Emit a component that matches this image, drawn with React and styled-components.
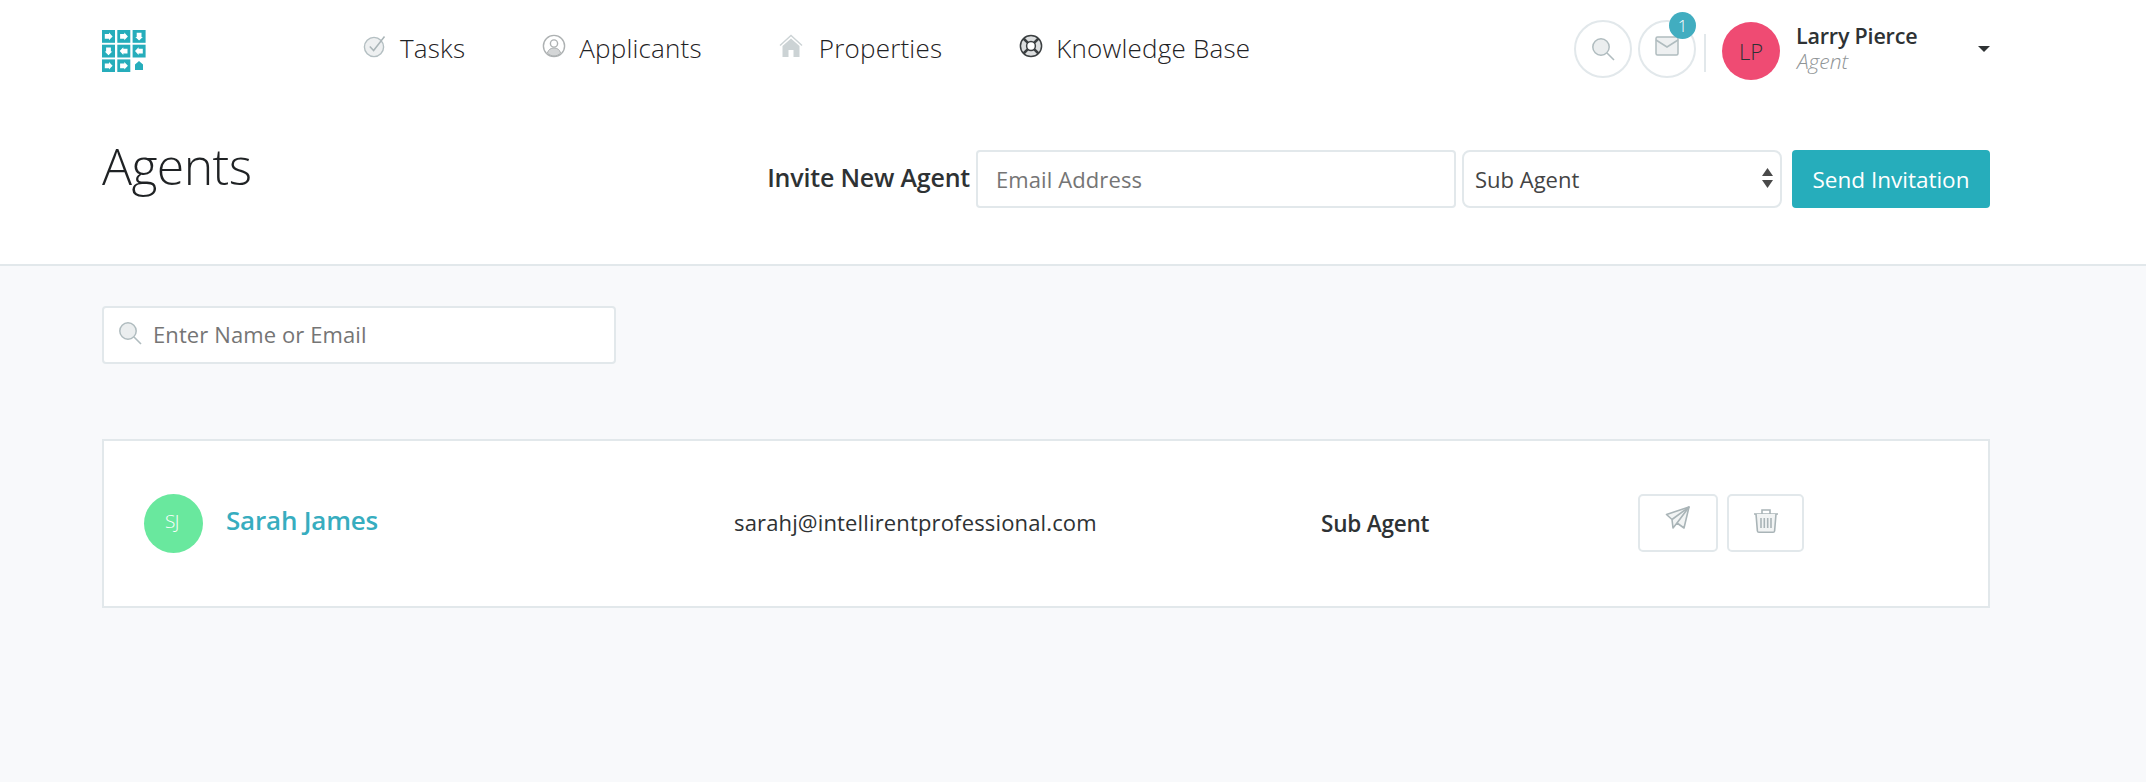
import React from "react";
import styled, {createGlobalStyle} from "styled-components";

const GlobalStyle = createGlobalStyle`
  html, body {
    margin: 0;
    background-color: #f8f9fb;
    font-family: "Open Sans", "Liberation Sans", sans-serif;
    color: #2e3234;
  }
`

const TopArea = styled.div`
  height: 266px;
  box-sizing: border-box;
  padding: 0 156px 0 102px;
  background-color: #fff;
  border-bottom: 2px solid #e2e8eb;
`

const HeaderRow = styled.header`
  height: 100px;
  display: flex;
  align-items: flex-start;
`

const Logo = styled.svg`
  width: 44px;
  height: 42px;
  margin-top: 30px;
  flex: none;
`

const Nav = styled.nav`
  display: flex;
  margin-left: 217px;
  margin-top: 30px;
`

const NavItem = styled.a`
  display: flex;
  align-items: center;
  height: 36px;
  margin-right: 77px;
  font-size: 26px;
  font-weight: 300;
  letter-spacing: 0.2px;
  color: #1f2224;

  svg {
    width: 24px;
    height: 24px;
    margin-right: ${p => p.$gap || 13}px;
    margin-top: -4px;
    flex: none;
  }
`

const UserArea = styled.div`
  margin-left: auto;
  display: flex;
  align-items: flex-start;
  width: 416px;
  padding-top: 20px;
`

const RoundButton = styled.div`
  position: relative;
  width: 58px;
  height: 58px;
  box-sizing: border-box;
  margin-right: 6px;
  border: 2px solid #e2e8eb;
  border-radius: 50%;
  display: flex;
  align-items: center;
  justify-content: center;
  flex: none;

  svg {
    width: 24px;
    height: 24px;
    margin-top: ${p => p.$lift || 0}px;
  }
`

const Badge = styled.span`
  position: absolute;
  top: -10px;
  right: -2px;
  width: 27px;
  height: 27px;
  border-radius: 50%;
  background-color: #41adc0;
  color: #fff;
  font-size: 17px;
  font-weight: 300;
  line-height: 27px;
  text-align: center;
`

const Divider = styled.div`
  width: 2px;
  height: 38px;
  margin: 14px 16px 0 2px;
  background-color: #e2e8eb;
  flex: none;
`

const Avatar = styled.div`
  width: ${p => p.$size}px;
  height: ${p => p.$size}px;
  box-sizing: border-box;
  border-radius: 50%;
  background-color: ${p => p.$color};
  color: ${p => p.$text};
  font-size: ${p => p.$font}px;
  font-weight: 300;
  display: flex;
  align-items: center;
  justify-content: center;
  flex: none;
`

const UserAvatar = styled(Avatar)`
  margin-top: 2px;
`

const AgentAvatar = styled(Avatar)`
  padding: 0 3px 5px 0;
  letter-spacing: -0.5px;
`

const UserText = styled.div`
  margin-left: 16px;
  flex: 1;
`

const UserName = styled.div`
  font-size: 21.5px;
  font-weight: 600;
  line-height: 28px;
  letter-spacing: -0.2px;
  margin-top: 2px;
`

const UserRole = styled.div`
  margin-left: 1px;
  font-size: 21px;
  font-style: italic;
  font-weight: 300;
  line-height: 22px;
  color: #8f9496;
`

const Caret = styled.div`
  width: 0;
  height: 0;
  margin-top: 26px;
  border-left: 6px solid transparent;
  border-right: 6px solid transparent;
  border-top: 6px solid #2e3234;
`

const TitleRow = styled.div`
  display: flex;
  align-items: flex-start;
`

const Title = styled.h1`
  margin: 33px 0 0;
  font-size: 50px;
  line-height: 66px;
  font-weight: 300;
  letter-spacing: -0.6px;
  color: #1f2224;
`

const InviteForm = styled.form`
  margin-left: auto;
  margin-top: 50px;
  display: flex;
  align-items: flex-start;
`

const InviteLabel = styled.label`
  margin-right: 6px;
  font-size: 25px;
  font-weight: 600;
  line-height: 54px;
  letter-spacing: -0.2px;
`

const TextInput = styled.input`
  width: ${p => p.$width}px;
  height: 58px;
  box-sizing: border-box;
  padding: 0 ${p => p.$pad || 18}px;
  background-color: #fff;
  border: 2px solid #e2e8eb;
  border-radius: 4px;
  font-family: inherit;
  font-size: 22px;
  font-weight: 400;
  letter-spacing: 0.1px;
  color: #333;
  outline: none;

  &::placeholder {
    color: #757575;
    opacity: 1;
  }
`

const SelectWrap = styled.div`
  position: relative;
  margin: 0 10px 0 6px;
  width: 320px;
  height: 58px;
`

const Select = styled.select`
  width: 100%;
  height: 100%;
  box-sizing: border-box;
  padding: 0 11px;
  appearance: none;
  background-color: #fff;
  border: 2px solid #e2e8eb;
  border-radius: 8px;
  font-family: inherit;
  font-size: 22px;
  color: #444;
  outline: none;
`

const SelectArrows = styled.svg`
  position: absolute;
  top: 17px;
  right: 9px;
  width: 11px;
  height: 22px;
  pointer-events: none;
`

const SendButton = styled.button`
  width: 198px;
  height: 58px;
  padding: 0;
  border: 0;
  border-radius: 4px;
  background-color: #26adbb;
  color: #fff;
  font-family: inherit;
  font-size: 22.5px;
  font-weight: 500;
`

const Content = styled.main`
  height: 516px;
  box-sizing: border-box;
  padding: 40px 156px 0 102px;
`

const SearchBox = styled.div`
  position: relative;
  width: 514px;

  input {
    padding-bottom: 2px;
  }
`

const SearchIcon = styled.svg`
  position: absolute;
  top: 15px;
  left: 16px;
  width: 24px;
  height: 24px;
`

const AgentCard = styled.section`
  margin-top: 75px;
  height: 169px;
  box-sizing: border-box;
  padding-left: 40px;
  background-color: #fff;
  border: 2px solid #e2e8eb;
  display: grid;
  grid-template-columns: 590px 587px 317px auto;
  align-items: center;
`

const NameCell = styled.div`
  display: flex;
  align-items: center;
`

const AgentName = styled.a`
  margin-left: 23px;
  margin-bottom: 7px;
  font-size: 26px;
  font-weight: 600;
  letter-spacing: -0.2px;
  color: #37adbf;
`

const AgentEmail = styled.div`
  margin-bottom: 4px;
  font-size: 22px;
  font-weight: 400;
  letter-spacing: 0.15px;
  color: #2e3234;
`

const AgentRole = styled.div`
  font-size: 22.5px;
  font-weight: 600;
  letter-spacing: -0.2px;
`

const Actions = styled.div`
  display: flex;
  gap: 9px;
  margin-bottom: 2px;
`

const ActionButton = styled.button`
  width: ${p => p.$width}px;
  height: 58px;
  padding: 0;
  background-color: #fff;
  border: 2px solid #e2e8eb;
  border-radius: 5px;
  display: flex;
  align-items: center;
  justify-content: center;

  svg {
    width: 26px;
    height: 26px;
    margin-top: ${p => p.$lift || -4}px;
  }
`

const LogoIcon = () => {
    const cells = [
        [0, 0, 0], [15.3, 0, 0], [30.6, 0, 90],
        [0, 14.7, 90], [15.3, 14.7, 180], [30.6, 14.7, 180],
        [0, 29.4, 0], [15.3, 29.4, 0],
    ];
    return (
        <Logo viewBox="0 0 44 42">
            {cells.map(([x, y, r]) => (
                <g key={`${x}-${y}`} transform={`translate(${x} ${y})`}>
                    <rect width="13" height="12.8" fill="#26adbb"/>
                    <path
                        d="M2.800 4h4.200V2.600l3.600 3.800L7 10.200V8.800H2.800z"
                        fill="#fff"
                        transform={`rotate(${r} 6.500 6.400)`}
                    />
                </g>
            ))}
            <path d="M37 31l4 3.600v5.400h-8v-5.400z" fill="#26adbb"/>
        </Logo>
    );
};

const TasksIcon = () => (
    <svg viewBox="0 0 24 24" fill="none">
        <circle cx="11" cy="13" r="9.600" fill="#eef0f1" stroke="#b4bfc2" strokeWidth="1.400"/>
        <path d="M6.800 12.500l3.800 4L21.500 2.500" stroke="#aab5b8" strokeWidth="1.500"/>
    </svg>
);

const ApplicantsIcon = () => (
    <svg viewBox="0 0 24 24" fill="none">
        <circle cx="12" cy="12" r="10.600" stroke="#adb1b2" strokeWidth="1.400"/>
        <circle cx="12" cy="9.500" r="3.600" stroke="#adb1b2" strokeWidth="1.400"/>
        <path d="M5.400 19c1-3.600 3.600-5 6.600-5s5.600 1.400 6.600 5c-1.800 1.900-4 2.900-6.600 2.900S7.200 20.900 5.400 19z" fill="#d4d6d7" stroke="#adb1b2"/>
    </svg>
);

const HomeIcon = () => (
    <svg viewBox="0 0 24 24" fill="none">
        <path d="M1 11.500L12 1.500l11 10" stroke="#ccd3d5" strokeWidth="1.400"/>
        <path d="M3.500 12L12 4.500l8.500 7.500v11h-6v-7h-5v7h-6z" fill="#ccd3d5"/>
    </svg>
);

const SupportIcon = () => (
    <svg viewBox="0 0 24 24" fill="none">
        <circle cx="12" cy="12" r="10.600" fill="#dcdedf" stroke="#3b3f41" strokeWidth="1.500"/>
        <circle cx="12" cy="12" r="4.400" fill="#fff" stroke="#3b3f41" strokeWidth="1.500"/>
        <path d="M4.500 4.500l4.400 4.400M19.500 4.500l-4.400 4.400M4.500 19.500l4.400-4.400M19.500 19.500l-4.400-4.400" stroke="#3b3f41" strokeWidth="2.600"/>
    </svg>
);

const MagnifierShape = () => (
    <>
        <circle cx="10" cy="10" r="8.200" fill="#ebeeef" stroke="#b0bcbf" strokeWidth="1.500"/>
        <path d="M16 16l7 7" stroke="#b0bcbf" strokeWidth="1.600"/>
    </>
);

const MailIcon = () => (
    <svg viewBox="0 0 24 24" fill="none">
        <rect x="1" y="3" width="22" height="18" rx="1.500" fill="#eef0f1" stroke="#b0bcbf" strokeWidth="1.500"/>
        <path d="M1 6l11 7 11-7" stroke="#b0bcbf" strokeWidth="1.500"/>
    </svg>
);

const PlaneIcon = () => (
    <svg viewBox="0 0 26 26" fill="none" stroke="#a9b4b7" strokeWidth="1.600" strokeLinejoin="round">
        <path d="M1.500 9.500L24 2l-5 21-7-5-4 5-1-8.500z" fill="#f2f4f4"/>
        <path d="M7 14.500L24 2 12 18"/>
    </svg>
);

const TrashIcon = () => (
    <svg viewBox="0 0 26 26" fill="none" stroke="#a9b4b7" strokeWidth="1.600">
        <path d="M1 6h24M9 6V2h8v4"/>
        <path d="M3 6l1.400 17a1.500 1.500 0 0 0 1.500 1.300h14.200a1.500 1.500 0 0 0 1.500-1.300L23 6" fill="#f2f4f4"/>
        <path d="M8 10v10M11.300 10v10M14.700 10v10M18 10v10"/>
    </svg>
);

const App = () => (
    <>
        <GlobalStyle/>
        <TopArea>
            <HeaderRow>
                <LogoIcon/>
                <Nav>
                    <NavItem><TasksIcon/>Tasks</NavItem>
                    <NavItem><ApplicantsIcon/>Applicants</NavItem>
                    <NavItem $gap={16}><HomeIcon/>Properties</NavItem>
                    <NavItem><SupportIcon/>Knowledge Base</NavItem>
                </Nav>
                <UserArea>
                    <RoundButton>
                        <svg viewBox="0 0 24 24" fill="none"><MagnifierShape/></svg>
                    </RoundButton>
                    <RoundButton $lift={-6}>
                        <MailIcon/>
                        <Badge>1</Badge>
                    </RoundButton>
                    <Divider/>
                    <UserAvatar $size={58} $color="#ef4b73" $text="#2e3234" $font={22}>LP</UserAvatar>
                    <UserText>
                        <UserName>Larry Pierce</UserName>
                        <UserRole>Agent</UserRole>
                    </UserText>
                    <Caret/>
                </UserArea>
            </HeaderRow>
            <TitleRow>
                <Title>Agents</Title>
                <InviteForm>
                    <InviteLabel>Invite New Agent</InviteLabel>
                    <TextInput $width={480} placeholder="Email Address"/>
                    <SelectWrap>
                        <Select defaultValue="Sub Agent">
                            <option>Sub Agent</option>
                        </Select>
                        <SelectArrows viewBox="0 0 11 22">
                            <path d="M5.500 1L11 9H0zM0 13h11l-5.500 8z" fill="#4a4a4a"/>
                        </SelectArrows>
                    </SelectWrap>
                    <SendButton type="button">Send Invitation</SendButton>
                </InviteForm>
            </TitleRow>
        </TopArea>
        <Content>
            <SearchBox>
                <SearchIcon viewBox="0 0 24 24" fill="none"><MagnifierShape/></SearchIcon>
                <TextInput $width={514} $pad={49} placeholder="Enter Name or Email"/>
            </SearchBox>
            <AgentCard>
                <NameCell>
                    <AgentAvatar $size={59} $color="#69e89e" $text="#fff" $font={19}>SJ</AgentAvatar>
                    <AgentName>Sarah James</AgentName>
                </NameCell>
                <AgentEmail>sarahj@intellirentprofessional.com</AgentEmail>
                <AgentRole>Sub Agent</AgentRole>
                <Actions>
                    <ActionButton $width={80} $lift={-10}><PlaneIcon/></ActionButton>
                    <ActionButton $width={77}><TrashIcon/></ActionButton>
                </Actions>
            </AgentCard>
        </Content>
    </>
);

export default App;
